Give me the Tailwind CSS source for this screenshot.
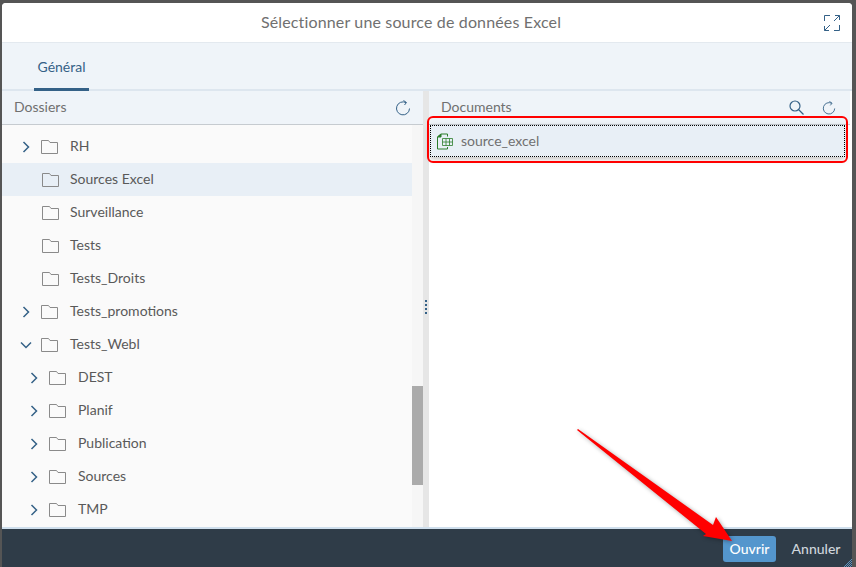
<!DOCTYPE html>
<html lang="fr">
<head>
    <meta charset="UTF-8">
    <title>Sélectionner une source de données Excel</title>
    <script src="https://cdn.jsdelivr.net/npm/@tailwindcss/browser@4"></script>
</head>
<body class="w-[856px] h-[567px] overflow-hidden bg-[#555555] font-['Lato',sans-serif]">
<div class="relative w-[856px] h-[567px] pt-[3px] pl-[2px] pr-[4px]">
    <div class="flex flex-col h-[564px] bg-white rounded-t-[4px] overflow-hidden">
        <!-- Title -->
        <header class="relative flex items-center justify-center h-[40px] shrink-0 pr-[32px] bg-white border-b border-[#e3e9ef]">
            <h1 class="mb-[2px] text-[16px] text-[#707070] tracking-[0.15px]">Sélectionner une source de données Excel</h1>
            <svg class="absolute right-[12px] top-[12px] w-[16px] h-[16px]" viewBox="0 0 16 16" fill="none" stroke="#346187" stroke-width="1">
                <path d="M6 0.500H0.500V6M10 15.500H15.500V10M0.500 15.500L6 10M0.500 11V15.500H5M15.500 0.500L10 6M11 0.500H15.500V5"/>
            </svg>
        </header>
        <!-- Tabs -->
        <nav class="flex h-[48px] shrink-0 pl-[32px] bg-[#eff4f9] border-b-2 border-[#dde6ef]">
            <div class="flex items-center justify-center w-[55px] h-[48px] pt-[2px] border-b-[3px] border-[#346187] text-[14px] text-[#346187]">Général</div>
        </nav>
        <!-- Panels -->
        <div class="flex flex-1 min-h-0">
            <section class="flex flex-col w-[421px] shrink-0">
                <div class="flex items-center justify-between h-[34px] shrink-0 pl-[12px] pr-[10px] bg-[#eff4f9] border-b border-[#c6cbd0]">
                    <span class="mb-[2px] text-[14px] text-[#707070]">Dossiers</span>
                    <svg class="w-[16px] h-[16px] mr-[2px]" viewBox="0 0 16 16" fill="none" stroke="#346187" stroke-width="1">
                        <path d="M11 2.600A6.500 6.500 0 1 0 14.500 8.500M8.500 0.500L11.500 2.500L9.500 5"/>
                    </svg>
                </div>
                <div class="flex flex-1 min-h-0">
                    <ul class="flex-1 pt-[5px] bg-[#fafafa] text-[14px] text-[#595959]">
                        <li class="flex items-center h-[33px] pl-[20px] gap-[11px]">
                            <svg class="w-[8px] h-[12px]" viewBox="0 0 8 12" fill="none" stroke="#346187" stroke-width="1.500"><path d="M1.500 1L6.500 6L1.500 11"/></svg>
                            <svg class="w-[17px] h-[14px]" viewBox="0 0 17 14" fill="none" stroke="#8a8a8a"><path d="M0.500 13.500V0.500H7.500L9 2.500H16.500V13.500Z"/></svg>
                            <span class="ml-[1px] mb-[2px]">RH</span>
                        </li>
                        <li class="flex items-center h-[33px] pl-[40px] bg-[#e8eff6]">
                            <svg class="w-[17px] h-[14px] mr-[11px]" viewBox="0 0 17 14" fill="none" stroke="#8a8a8a"><path d="M0.500 13.500V0.500H7.500L9 2.500H16.500V13.500Z"/></svg>
                            <span class="mb-[2px]">Sources Excel</span>
                        </li>
                        <li class="flex items-center h-[33px] pl-[40px]">
                            <svg class="w-[17px] h-[14px] mr-[11px]" viewBox="0 0 17 14" fill="none" stroke="#8a8a8a"><path d="M0.500 13.500V0.500H7.500L9 2.500H16.500V13.500Z"/></svg>
                            <span class="mb-[2px]">Surveillance</span>
                        </li>
                        <li class="flex items-center h-[33px] pl-[40px]">
                            <svg class="w-[17px] h-[14px] mr-[11px]" viewBox="0 0 17 14" fill="none" stroke="#8a8a8a"><path d="M0.500 13.500V0.500H7.500L9 2.500H16.500V13.500Z"/></svg>
                            <span class="mb-[2px]">Tests</span>
                        </li>
                        <li class="flex items-center h-[33px] pl-[40px]">
                            <svg class="w-[17px] h-[14px] mr-[11px]" viewBox="0 0 17 14" fill="none" stroke="#8a8a8a"><path d="M0.500 13.500V0.500H7.500L9 2.500H16.500V13.500Z"/></svg>
                            <span class="mb-[2px]">Tests_Droits</span>
                        </li>
                        <li class="flex items-center h-[33px] pl-[20px] gap-[11px]">
                            <svg class="w-[8px] h-[12px]" viewBox="0 0 8 12" fill="none" stroke="#346187" stroke-width="1.500"><path d="M1.500 1L6.500 6L1.500 11"/></svg>
                            <svg class="w-[17px] h-[14px]" viewBox="0 0 17 14" fill="none" stroke="#8a8a8a"><path d="M0.500 13.500V0.500H7.500L9 2.500H16.500V13.500Z"/></svg>
                            <span class="ml-[1px] mb-[2px]">Tests_promotions</span>
                        </li>
                        <li class="flex items-center h-[33px] pl-[18px] gap-[9px]">
                            <svg class="w-[12px] h-[8px]" viewBox="0 0 12 8" fill="none" stroke="#346187" stroke-width="1.500"><path d="M1 1.500L6 6.500L11 1.500"/></svg>
                            <svg class="w-[17px] h-[14px]" viewBox="0 0 17 14" fill="none" stroke="#8a8a8a"><path d="M0.500 13.500V0.500H7.500L9 2.500H16.500V13.500Z"/></svg>
                            <span class="ml-[3px] mb-[2px]">Tests_Webl</span>
                        </li>
                        <li class="flex items-center h-[33px] pl-[28px] gap-[11px]">
                            <svg class="w-[8px] h-[12px]" viewBox="0 0 8 12" fill="none" stroke="#346187" stroke-width="1.500"><path d="M1.500 1L6.500 6L1.500 11"/></svg>
                            <svg class="w-[17px] h-[14px]" viewBox="0 0 17 14" fill="none" stroke="#8a8a8a"><path d="M0.500 13.500V0.500H7.500L9 2.500H16.500V13.500Z"/></svg>
                            <span class="ml-[1px] mb-[2px]">DEST</span>
                        </li>
                        <li class="flex items-center h-[33px] pl-[28px] gap-[11px]">
                            <svg class="w-[8px] h-[12px]" viewBox="0 0 8 12" fill="none" stroke="#346187" stroke-width="1.500"><path d="M1.500 1L6.500 6L1.500 11"/></svg>
                            <svg class="w-[17px] h-[14px]" viewBox="0 0 17 14" fill="none" stroke="#8a8a8a"><path d="M0.500 13.500V0.500H7.500L9 2.500H16.500V13.500Z"/></svg>
                            <span class="ml-[1px] mb-[2px]">Planif</span>
                        </li>
                        <li class="flex items-center h-[33px] pl-[28px] gap-[11px]">
                            <svg class="w-[8px] h-[12px]" viewBox="0 0 8 12" fill="none" stroke="#346187" stroke-width="1.500"><path d="M1.500 1L6.500 6L1.500 11"/></svg>
                            <svg class="w-[17px] h-[14px]" viewBox="0 0 17 14" fill="none" stroke="#8a8a8a"><path d="M0.500 13.500V0.500H7.500L9 2.500H16.500V13.500Z"/></svg>
                            <span class="ml-[1px] mb-[2px]">Publication</span>
                        </li>
                        <li class="flex items-center h-[33px] pl-[28px] gap-[11px]">
                            <svg class="w-[8px] h-[12px]" viewBox="0 0 8 12" fill="none" stroke="#346187" stroke-width="1.500"><path d="M1.500 1L6.500 6L1.500 11"/></svg>
                            <svg class="w-[17px] h-[14px]" viewBox="0 0 17 14" fill="none" stroke="#8a8a8a"><path d="M0.500 13.500V0.500H7.500L9 2.500H16.500V13.500Z"/></svg>
                            <span class="ml-[1px] mb-[2px]">Sources</span>
                        </li>
                        <li class="flex items-center h-[33px] pl-[28px] gap-[11px]">
                            <svg class="w-[8px] h-[12px]" viewBox="0 0 8 12" fill="none" stroke="#346187" stroke-width="1.500"><path d="M1.500 1L6.500 6L1.500 11"/></svg>
                            <svg class="w-[17px] h-[14px]" viewBox="0 0 17 14" fill="none" stroke="#8a8a8a"><path d="M0.500 13.500V0.500H7.500L9 2.500H16.500V13.500Z"/></svg>
                            <span class="ml-[1px] mb-[2px]">TMP</span>
                        </li>
                    </ul>
                    <!-- scrollbar -->
                    <div class="w-[11px] shrink-0 bg-[#f6f6f6] pt-[261px]">
                        <div class="h-[99px] bg-[#ababab]"></div>
                    </div>
                </div>
            </section>
            <!-- splitter -->
            <div class="flex flex-col items-center justify-center gap-[2px] w-[6px] shrink-0 bg-[#e6e6e6] pb-[4px]">
                <span class="w-[2px] h-[2px] bg-[#346187]"></span>
                <span class="w-[2px] h-[2px] bg-[#346187]"></span>
                <span class="w-[2px] h-[2px] bg-[#346187]"></span>
                <span class="w-[2px] h-[2px] bg-[#346187]"></span>
            </div>
            <section class="flex flex-col flex-1 pr-[2px] bg-white">
                <div class="flex items-center justify-between h-[34px] shrink-0 pl-[12px] pr-[14px] bg-[#eff4f9] border-b border-[#c6cbd0]">
                    <span class="mb-[2px] text-[14px] text-[#707070]">Documents</span>
                    <div class="flex items-center gap-[18px]">
                        <svg class="w-[15px] h-[15px]" viewBox="0 0 15 15" fill="none" stroke="#346187" stroke-width="1.200">
                            <circle cx="6" cy="6" r="5"/><path d="M9.500 9.500L14.500 14.500"/>
                        </svg>
                        <svg class="w-[14px] h-[16px]" viewBox="0 0 16 16" fill="none" stroke="#346187" stroke-width="1">
                            <path d="M11 2.600A6.500 6.500 0 1 0 14.500 8.500M8.500 0.500L11.500 2.500L9.500 5"/>
                        </svg>
                    </div>
                </div>
                <div class="flex items-center h-[32px] ml-[1px] mr-[5px] pl-[5px] bg-[#e8eff6] border border-dotted border-black text-[14px] text-[#707070] shadow-[0_2px_6px_rgba(0,0,0,0.25)]">
                    <svg class="w-[17px] h-[17px] mr-[8px]" viewBox="0 0 17 17" fill="none" stroke="#2b7d2b">
                        <path d="M1.500 16V4L5 1H11.500V3.500M1.500 16H11.500V14"/>
                        <path d="M1.500 4L5 1V4Z" fill="#2b7d2b"/>
                        <path d="M6.500 5.500H16.500V12.500H6.500ZM6.500 9H16.500M10 5.500V12.500M13.500 5.500V12.500" stroke-width="0.800"/>
                    </svg>
                    <span class="mb-[2px]">source_excel</span>
                </div>
            </section>
        </div>
        <!-- Footer -->
        <footer class="flex items-center justify-end gap-[8px] h-[40px] shrink-0 pr-[4px] bg-[#2f3c48] border-t-2 border-[#cfdfed]">
            <button class="h-[26px] w-[53px] mt-[1px] rounded-[3px] bg-[#5496cd] text-[14px] font-medium text-white">Ouvrir</button>
            <button class="h-[26px] w-[64px] mt-[1px] text-[14px] font-medium text-[#cfd6dc]">Annuler</button>
        </footer>
    </div>
    <!-- red annotation box -->
    <div class="absolute left-[427px] top-[116px] w-[421px] h-[47px] rounded-[6px] border-2 border-[#ff0000]"></div>
    <!-- red arrow -->
    <svg class="absolute left-0 top-0 w-[856px] h-[567px] pointer-events-none drop-shadow-[1px_1px_2px_rgba(0,0,0,0.35)]" viewBox="0 0 856 567">
        <path d="M578 429L713 525L716 517L732 541L703 536L706 534L577 430Z" fill="#ff0000"/>
    </svg>
    <!-- resize grip -->
    <svg class="absolute right-[4px] bottom-0 w-[8px] h-[8px]" viewBox="0 0 8 8" stroke="#5e93bd" stroke-width="1"><path d="M8 0L0 8M8 2L2 8M8 4L4 8M8 6L6 8"/></svg>
</div>
</body>
</html>
